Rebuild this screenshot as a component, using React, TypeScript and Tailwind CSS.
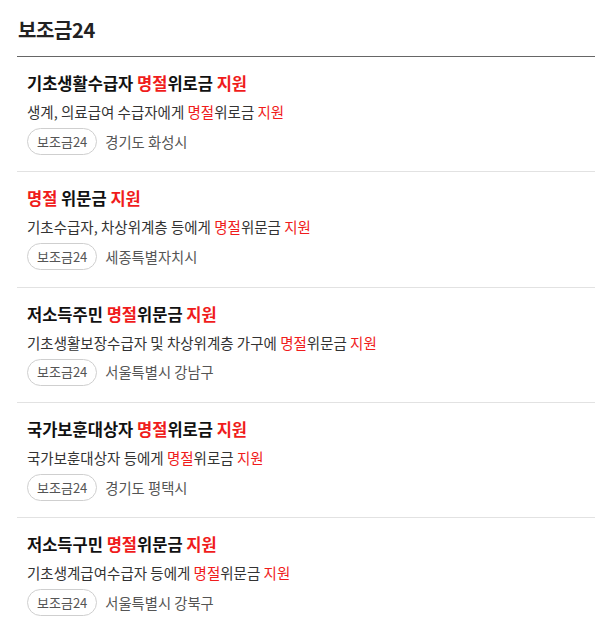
import React from "react";

type Item = { title: React.ReactNode; desc: React.ReactNode; loc: string };

const R = ({ children }: { children: React.ReactNode }) => (
  <span className="text-[#f01c1c]">{children}</span>
);

const items: Item[] = [
  {
    title: <>기초생활수급자 <R>명절</R>위로금 <R>지원</R></>,
    desc: <>생계, 의료급여 수급자에게 <R>명절</R>위로금 <R>지원</R></>,
    loc: "경기도 화성시",
  },
  {
    title: <><R>명절</R> 위문금 <R>지원</R></>,
    desc: <>기초수급자, 차상위계층 등에게 <R>명절</R>위문금 <R>지원</R></>,
    loc: "세종특별자치시",
  },
  {
    title: <>저소득주민 <R>명절</R>위문금 <R>지원</R></>,
    desc: <>기초생활보장수급자 및 차상위계층 가구에 <R>명절</R>위문금 <R>지원</R></>,
    loc: "서울특별시 강남구",
  },
  {
    title: <>국가보훈대상자 <R>명절</R>위로금 <R>지원</R></>,
    desc: <>국가보훈대상자 등에게 <R>명절</R>위로금 <R>지원</R></>,
    loc: "경기도 평택시",
  },
  {
    title: <>저소득구민 <R>명절</R>위문금 <R>지원</R></>,
    desc: <>기초생계급여수급자 등에게 <R>명절</R>위문금 <R>지원</R></>,
    loc: "서울특별시 강북구",
  },
];

export default function App() {
  return (
    <div
      className="w-[595px] bg-white"
      style={{ fontFamily: '"Noto Sans CJK KR", "Noto Sans", sans-serif' }}
    >
      <div className="ml-[17px]">
        <div className="pt-[15px] pb-[12px] pl-[1px] border-b border-[#666]">
          <h1 className="text-[20px] leading-[29px] font-bold text-[#222] tracking-[-0.4px]">보조금24</h1>
        </div>
        {items.map((it, i) => (
          <div
            key={i}
            className={`pl-[10px] pt-[14px] pb-[16.3px] ${i < items.length - 1 ? "border-b border-[#e2e2e2]" : ""}`}
          >
            <div className="text-[16.5px] leading-[25px] font-bold text-[#111]">{it.title}</div>
            <div className="mt-[5px] text-[14.5px] leading-[21px] text-[#333]">{it.desc}</div>
            <div className="mt-[6px] flex items-center gap-[8px]">
              <span className="h-[27px] px-[9px] flex items-center rounded-full border border-[#cfcfcf] text-[13px] text-[#555]">
                보조금24
              </span>
              <span className="text-[14.3px] text-[#555]">{it.loc}</span>
            </div>
          </div>
        ))}
      </div>
    </div>
  );
}
